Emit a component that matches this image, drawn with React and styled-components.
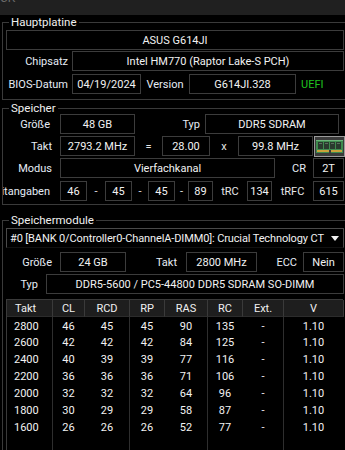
import React from 'react';
import styled, { createGlobalStyle } from 'styled-components';

const GlobalStyle = createGlobalStyle`
  html, body {
    margin: 0;
    padding: 0;
    background: #000;
    overflow: hidden;
  }
  body {
    font-family: Roboto, "Liberation Sans", sans-serif;
    font-size: 11px;
    color: #e8e8e8;
  }
`;

const Window = styled.div`
  width: 345px;
  height: 450px;
  overflow: hidden;
  background: #000;
`;

const TitleStrip = styled.div`
  height: 15px;
  background: #202020;
  overflow: hidden;
  color: #6a6a6a;
  font-size: 12px;
  line-height: 12px;
`;

const TitleText = styled.div`
  margin-top: -8px;
`;

const Group = styled.fieldset`
  margin: ${p => p.$mt}px 0 0 2px;
  padding: 0 3px ${p => p.$pb}px 3px;
  border: 1px solid #3a3a3a;
  width: 338px;
  min-width: 0;
`;

const Legend = styled.legend`
  margin-left: 3px;
  padding: 0 2px;
  line-height: 10px;
  font-size: 11.5px;
  color: #f0f0f0;
`;

const Row = styled.div`
  display: flex;
  align-items: center;
  height: ${p => p.$h || 20}px;
  margin-top: ${p => p.$mt || 0}px;
`;

const Label = styled.div`
  width: ${p => p.$w}px;
  flex: none;
  margin-left: ${p => p.$ml || 0}px;
  text-align: ${p => p.$align || 'right'};
  padding-right: ${p => p.$pr ?? 0}px;
  box-sizing: border-box;
  white-space: nowrap;
  overflow: hidden;
  color: #e6ecf5;
  direction: ${p => p.$rtl ? 'rtl' : 'ltr'};
`;

const Field = styled.div`
  width: ${p => p.$w}px;
  flex: none;
  height: 100%;
  box-sizing: border-box;
  border: 1px solid #3c3c3c;
  display: flex;
  align-items: center;
  justify-content: center;
  white-space: nowrap;
  overflow: hidden;
  color: #f2f2f2;
`;

const Gap = styled.div`
  width: ${p => p.$w}px;
  flex: none;
  text-align: center;
  color: #e6e6e6;
`;

const Uefi = styled.div`
  margin-left: 5px;
  color: #1fc21f;
`;

const Select = styled.div`
  height: 20px;
  margin-top: 3px;
  box-sizing: border-box;
  border: 1px solid #4a4a4a;
  border-bottom-color: #111;
  display: flex;
  align-items: center;
  padding-left: 3px;
  white-space: nowrap;
  overflow: hidden;
  color: #f2f2f2;
`;

const SelectText = styled.div`
  flex: 1;
  overflow: hidden;
  letter-spacing: -0.12px;
`;

const Caret = styled.div`
  width: 0;
  height: 0;
  margin: 0 4px 0 2px;
  border-left: 4px solid transparent;
  border-right: 4px solid transparent;
  border-top: 5px solid #f0f0f0;
`;

const Table = styled.div`
  margin-top: 5px;
  width: 337px;
  height: 160px;
  box-sizing: border-box;
  border-left: 1px solid #3a3a3a;
  border-top: 1px solid #3a3a3a;
  display: grid;
  grid-template-columns: 46px 32px 45px 35px 43px 35px 41px 60px;
  grid-template-rows: 17px repeat(7, 17px) 1fr;
`;

const Head = styled.div`
  background: #1e1e1e;
  border-right: 1px solid #3a3a3a;
  border-bottom: 1px solid #2c2c2c;
  display: flex;
  align-items: center;
  justify-content: ${p => p.$left ? 'flex-start' : 'center'};
  padding-left: ${p => p.$left ? 8 : 0}px;
  color: #f0f0f0;
`;

const Cell = styled.div`
  display: flex;
  align-items: center;
  justify-content: ${p => p.$left ? 'flex-start' : 'center'};
  padding-left: ${p => p.$left ? 7 : 0}px;
  border-right: 1px solid ${p => p.$line ? '#2e2e2e' : 'transparent'};
  color: #f2f2f2;
  padding-top: ${p => p.$first ? 2 : 0}px;
`;

const RamIcon = () => (
  <svg width="31" height="21" viewBox="0 0 31 21" style={{ flex: 'none', marginLeft: 1 }}>
    <rect x="0.5" y="0.5" width="30" height="20" fill="#3a3a3a" stroke="#9a9a9a" />
    <rect x="2" y="4" width="27" height="13" fill="#3f8a4e" />
    <rect x="2" y="4" width="27" height="1" fill="#6cb37a" />
    {[4, 10, 16, 22].map(x => (
      <rect key={x} x={x} y="6" width="5" height="7" fill="#2a3a2e" />
    ))}
    {[4, 10, 16, 22].map(x => (
      <rect key={'l' + x} x={x + 1} y="7" width="3" height="1" fill="#5a6e5e" />
    ))}
    <rect x="3" y="14" width="25" height="2" fill="#c9a23a" />
    <rect x="15" y="14" width="2" height="3" fill="#3a3a3a" />
  </svg>
);

const headers = ['Takt', 'CL', 'RCD', 'RP', 'RAS', 'RC', 'Ext.', 'V'];
const rows = [
  ['2800', '46', '45', '45', '90', '135', '-', '1.10'],
  ['2600', '42', '42', '42', '84', '125', '-', '1.10'],
  ['2400', '40', '39', '39', '77', '116', '-', '1.10'],
  ['2200', '36', '36', '36', '71', '106', '-', '1.10'],
  ['2000', '32', '32', '32', '64', '96', '-', '1.10'],
  ['1800', '30', '29', '29', '58', '87', '-', '1.10'],
  ['1600', '26', '26', '26', '52', '77', '-', '1.10'],
];

export default function App() {
  return (
    <Window>
      <GlobalStyle />
      <TitleStrip>
        <TitleText>CK</TitleText>
      </TitleStrip>

      <Group $mt={2} $pb={5}>
        <Legend>Hauptplatine</Legend>
        <Row $mt={3}>
          <Field $w={338}>ASUS G614JI</Field>
        </Row>
        <Row $mt={1}>
          <Label $w={66} $pr={4}>Chipsatz</Label>
          <Field $w={272}>Intel HM770 (Raptor Lake-S PCH)</Field>
        </Row>
        <Row $mt={3}>
          <Label $w={66} $pr={4}>BIOS-Datum</Label>
          <Field $w={69}>04/19/2024</Field>
          <Label $w={48} $align="center">Version</Label>
          <Field $w={107}>G614JI.328</Field>
          <Uefi>UEFI</Uefi>
        </Row>
      </Group>

      <Group $mt={3} $pb={3}>
        <Legend>Speicher</Legend>
        <Row $mt={1}>
          <Label $w={54} $pr={10}>Größe</Label>
          <Field $w={75}>48 GB</Field>
          <Label $w={70} $pr={5}>Typ</Label>
          <Field $w={134}>DDR5 SDRAM</Field>
        </Row>
        <Row $mt={2}>
          <Label $w={54} $pr={8}>Takt</Label>
          <Field $w={75}>2793.2 MHz</Field>
          <Gap $w={27}>=</Gap>
          <Field $w={48}>28.00</Field>
          <Gap $w={28}>x</Gap>
          <Field $w={75}>99.8 MHz</Field>
          <RamIcon />
        </Row>
        <Row $mt={2}>
          <Label $w={54} $pr={8}>Modus</Label>
          <Field $w={215}>Vierfachkanal</Field>
          <Label $w={38} $pr={7}>CR</Label>
          <Field $w={31}>2T</Field>
        </Row>
        <Row $mt={3}>
          <Label $w={57} $ml={-3} $pr={10} $rtl>Zeitangaben</Label>
          <Field $w={27}>46</Field>
          <Gap $w={18}>-</Gap>
          <Field $w={27}>45</Field>
          <Gap $w={16}>-</Gap>
          <Field $w={27}>45</Field>
          <Gap $w={13}>-</Gap>
          <Field $w={25}>89</Field>
          <Gap $w={34}>tRC</Gap>
          <Field $w={25}>134</Field>
          <Gap $w={41}>tRFC</Gap>
          <Field $w={31}>615</Field>
        </Row>
      </Group>

      <Group $mt={10} $pb={0}>
        <Legend>Speichermodule</Legend>
        <Select>
          <SelectText>#0 [BANK 0/Controller0-ChannelA-DIMM0]: Crucial Technology CT</SelectText>
          <Caret />
        </Select>
        <Row $mt={4}>
          <Label $w={54} $pr={8}>Größe</Label>
          <Field $w={66}>24 GB</Field>
          <Label $w={60} $pr={9}>Takt</Label>
          <Field $w={71}>2800 MHz</Field>
          <Label $w={46} $pr={6}>ECC</Label>
          <Field $w={41}>Nein</Field>
        </Row>
        <Row $mt={2}>
          <Label $w={40} $pr={8}>Typ</Label>
          <Field $w={298}>DDR5-5600 / PC5-44800 DDR5 SDRAM SO-DIMM</Field>
        </Row>
        <Table>
          {headers.map((h, i) => (
            <Head key={h} $left={i === 0}>{h}</Head>
          ))}
          {rows.map((r, ri) =>
            r.map((v, ci) => (
              <Cell key={ri + '-' + ci} $left={ci === 0} $line={ci % 2 === 0} $first={ri === 0}>
                {v}
              </Cell>
            ))
          )}
          {headers.map((h, i) => (
            <Cell key={'e' + h} $line={i % 2 === 0} />
          ))}
        </Table>
      </Group>
    </Window>
  );
}
